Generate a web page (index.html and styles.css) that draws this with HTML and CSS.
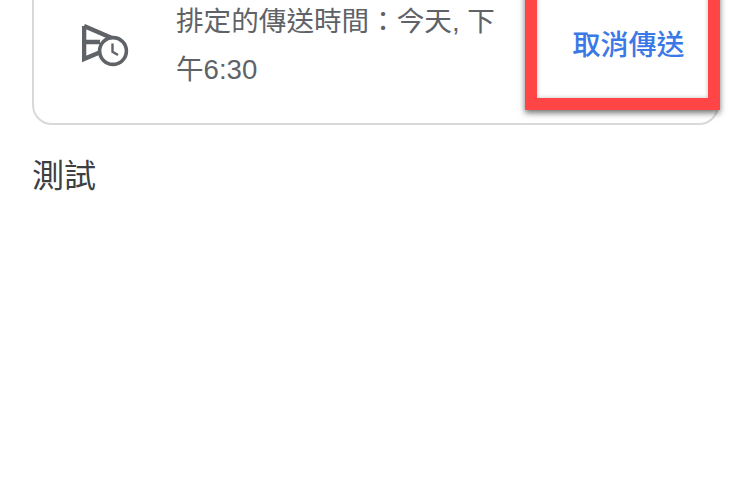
FILE: index.html
```html
<!DOCTYPE html>
<html lang="zh-Hant">
<head>
<meta charset="utf-8">
<title>排定的傳送</title>
<link rel="stylesheet" href="styles.css">
</head>
<body>
<main class="page">
  <section class="card">
    <svg class="icon" width="47" height="44" viewBox="0 0 47 44" aria-hidden="true">
      <path class="icon-plane" d="M2 3V36L21 28M2 3L31 15.5M2 19H18"/>
      <circle class="icon-clock" cx="31" cy="28" r="13.4"/>
      <path class="icon-hands" d="M30.5 20.5V28.8L36 32"/>
    </svg>
    <p class="message">排定的傳送時間：今天, 下午6:30</p>
    <button class="cancel" type="button">取消傳送</button>
  </section>
  <p class="body-text">測試</p>
</main>
</body>
</html>
```

FILE: styles.css
```css
html, body {
  margin: 0;
  height: 100%;
  overflow: hidden;
  background: #fff;
}

.page {
  padding: 0 31px 0 32px;
  font-family: "Liberation Sans", "Noto Sans CJK TC", sans-serif;
}

.card {
  display: flex;
  align-items: center;
  height: 155px;
  margin-top: -30px;
  box-sizing: border-box;
  border: 2px solid #d9d9dc;
  border-radius: 20px;
  padding-left: 48px;
  position: relative;
}

.icon {
  flex: none;
  margin-top: -6px;
}

.icon-plane,
.icon-clock,
.icon-hands {
  fill: none;
  stroke: #5f6368;
}

.icon-plane { stroke-width: 4.6; }
.icon-clock { stroke-width: 3.6; fill: #fff; }
.icon-hands { stroke-width: 2.4; }

.message {
  width: 332px;
  margin: -3px 0 0 47px;
  font-size: 27.6px;
  line-height: 48px;
  color: #5f6368;
}

.cancel {
  position: absolute;
  right: -3px;
  top: -4px;
  width: 195px;
  height: 142px;
  box-sizing: border-box;
  padding: 7px 0 0 12px;
  border: 12px solid #ff4545;
  background: #fff;
  box-shadow: 0 3px 6px rgba(0, 0, 0, 0.55), inset 0 0 4px rgba(0, 0, 0, 0.25);
  color: #3b78e7;
  font-family: inherit;
  font-size: 28px;
  font-weight: 500;
}

.body-text {
  margin: 27px 0 0;
  font-size: 32px;
  line-height: 48px;
  color: #3c4043;
}
```
